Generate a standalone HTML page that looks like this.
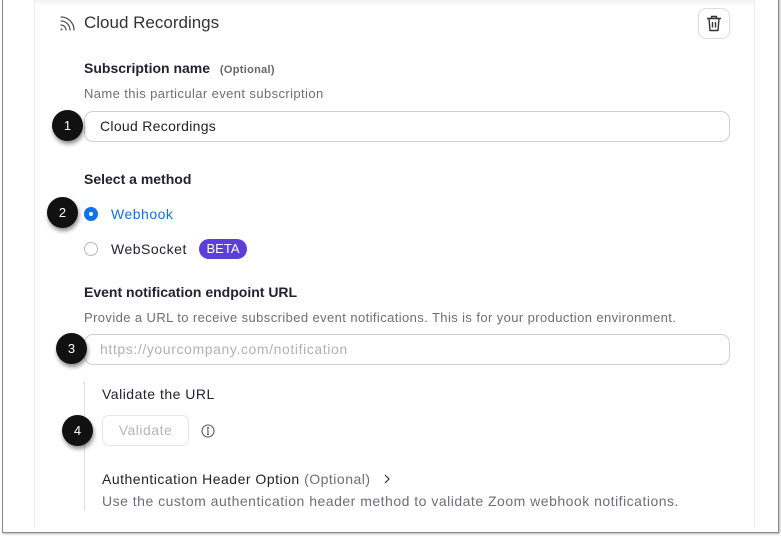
<!DOCTYPE html>
<html><head><style>
*{margin:0;padding:0;box-sizing:border-box}
body{width:781px;height:536px;background:#fff;position:relative;overflow:hidden;font-family:"Liberation Sans",sans-serif;color:#222230}
.a{position:absolute;white-space:nowrap}
.frame{position:absolute;left:2px;top:-2px;width:777px;height:535px;border:1px solid #8a8a8a;box-shadow:1px 1px 2px rgba(0,0,0,.3)}
.vl{position:absolute;width:1px;background:#ececf0}
.input{position:absolute;left:84px;width:646px;height:31px;border:1px solid #cfd0d6;border-radius:9px;font-size:14px;padding-left:15px;line-height:29px}
.badge{position:absolute;width:31px;height:31px;border-radius:50%;background:#111;color:#fff;font-size:13px;text-align:center;line-height:31px;box-shadow:1px 3px 4px rgba(0,0,0,.45)}
.b{font-weight:bold;font-size:14px}
.g{color:#6e6e7a;font-size:13px;letter-spacing:.4px}
.r{letter-spacing:.5px}
</style></head><body>
<div class="frame"></div>
<div class="vl" style="left:34px;top:0;height:528px"></div>
<div class="vl" style="left:754px;top:0;height:528px"></div>
<div style="position:absolute;left:35px;top:0;width:719px;height:6px;background:linear-gradient(#f3f3f5,#fff)"></div>
<svg class="a" style="left:59px;top:15px" width="17" height="17" viewBox="0 0 17 17" fill="none" stroke="#555" stroke-width="1.3" stroke-linecap="round"><path d="M2 2a13 13 0 0 1 13 13M2 6a9 9 0 0 1 9 9M2 10a5 5 0 0 1 5 5"/><circle cx="2.5" cy="14.5" r="1" fill="#555" stroke="none"/></svg>
<div class="a" style="left:84px;top:13px;font-size:17px;color:#333">Cloud Recordings</div>
<div class="a" style="left:698px;top:8px;width:32px;height:31px;border:1px solid #dcdce2;border-radius:8px"></div>
<svg class="a" style="left:706px;top:15px" width="16" height="17" viewBox="0 0 16 17" fill="none" stroke="#333" stroke-width="1.4" stroke-linejoin="round"><path d="M1 3.5h14M5.5 3.5V1.5h5v2M3 3.5l1 12h8l1-12M6.5 7v5.5M9.5 7v5.5"/></svg>
<div class="a b" style="left:84px;top:60px">Subscription name <span style="font-size:11px;color:#666;margin-left:6px;letter-spacing:.3px">(Optional)</span></div>
<div class="a g" style="left:84px;top:86px">Name this particular event subscription</div>
<div class="input" style="top:111px;color:#222;letter-spacing:.3px">Cloud Recordings</div>
<div class="badge" style="left:52px;top:110px">1</div>
<div class="a b" style="left:84px;top:171px">Select a method</div>
<div class="a" style="left:84px;top:207px;width:14px;height:14px;border-radius:50%;background:#0e72ed"><div style="position:absolute;left:5px;top:5px;width:4px;height:4px;border-radius:50%;background:#fff"></div></div>
<div class="a r" style="left:111px;top:206px;font-size:14px;color:#0e72ed">Webhook</div>
<div class="badge" style="left:47px;top:197px">2</div>
<div class="a" style="left:84px;top:242px;width:14px;height:14px;border-radius:50%;border:1px solid #b8b8c0"></div>
<div class="a r" style="left:111px;top:241px;font-size:14px">WebSocket</div>
<div class="a" style="left:199px;top:239px;width:48px;height:20px;border-radius:10px;background:#5b3fd6;color:#fff;font-size:13px;text-align:center;line-height:20px">BETA</div>
<div class="a b" style="left:84px;top:284px">Event notification endpoint URL</div>
<div class="a g" style="left:84px;top:310px">Provide a URL to receive subscribed event notifications. This is for your production environment.</div>
<div class="input" style="top:334px;color:#b0b0b8;letter-spacing:.6px">https://yourcompany.com/notification</div>
<div class="badge" style="left:56px;top:333px">3</div>
<div class="vl" style="left:84px;top:382px;height:128px;background:#dcdce2"></div>
<div class="a r" style="left:102px;top:386px;font-size:14px">Validate the URL</div>
<div class="a r" style="left:102px;top:415px;width:87px;height:31px;border:1px solid #e6e6ea;border-radius:7px;color:#b4b6be;font-size:14px;text-align:center;line-height:29px">Validate</div>
<svg class="a" style="left:201px;top:424px" width="14" height="14" viewBox="0 0 14 14" fill="none" stroke="#555" stroke-width="1.1"><circle cx="7" cy="7" r="6"/><path d="M7 6v4.5M6 10.5h2M6 6h1"/><circle cx="7" cy="4" r=".5" fill="#555"/></svg>
<div class="badge" style="left:62px;top:415px">4</div>
<div class="a r" style="left:102px;top:471px;font-size:14px">Authentication Header Option <span style="color:#6e6e7a">(Optional)</span></div>
<svg class="a" style="left:383px;top:473px" width="8" height="12" viewBox="0 0 8 12" fill="none" stroke="#333" stroke-width="1.2"><path d="M2 2l4 4-4 4"/></svg>
<div class="a r" style="left:102px;top:493px;font-size:14px;color:#6e6e7a">Use the custom authentication header method to validate Zoom webhook notifications.</div>
</body></html>
